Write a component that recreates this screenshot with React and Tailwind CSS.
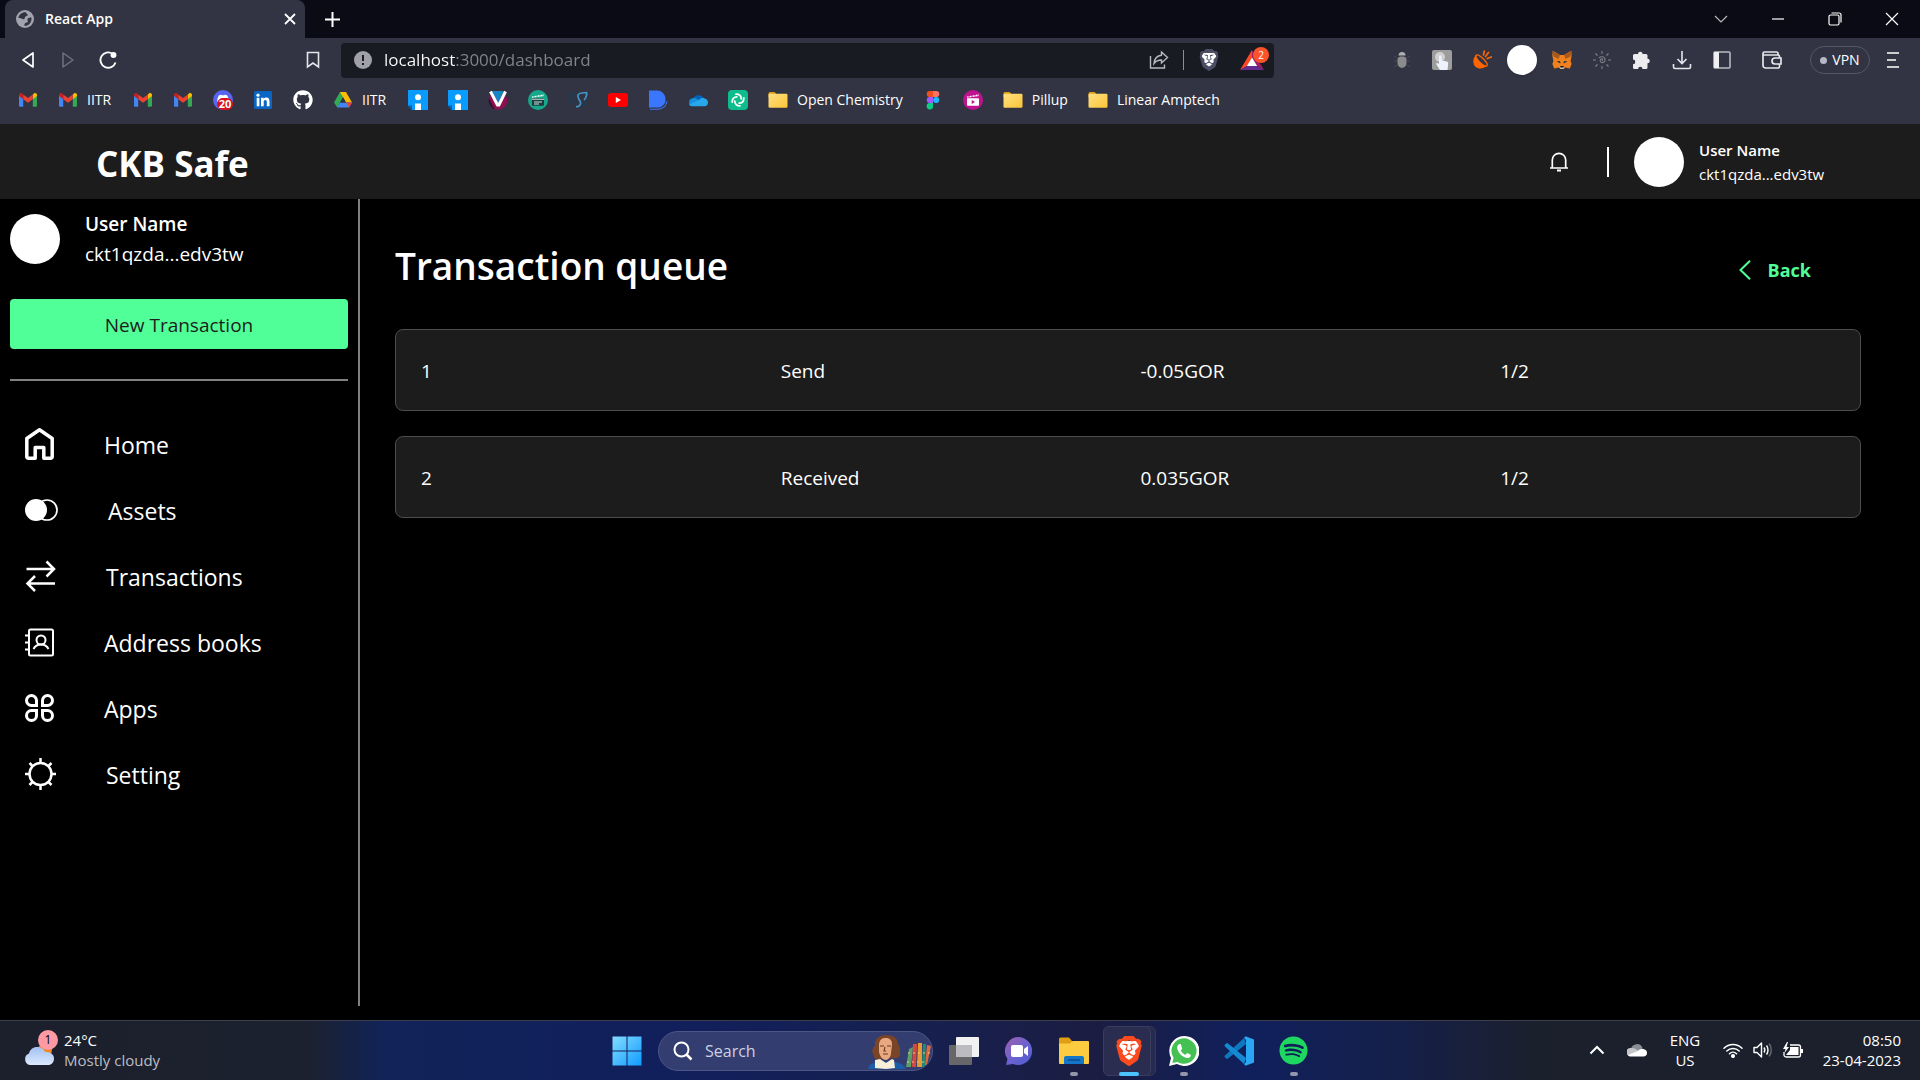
import React from 'react';
import { FaGithub, FaDiscord, FaSpotify } from 'react-icons/fa';
import { SiBrave } from 'react-icons/si';

/* ---------- bookmark icons ---------- */

const Gmail = () => (
  <svg width="20" height="20" viewBox="0 0 20 20">
    <path d="M1 5.5v10a1.3 1.3 0 0 0 1.3 1.3h2.9V8.2L1 5z" fill="#4285f4" />
    <path d="M14.8 8.2v8.6h2.9a1.3 1.3 0 0 0 1.3-1.3v-10z" fill="#34a853" />
    <path d="M14.8 4.4v4.8L19 6V4.9c0-1.6-1.8-2.5-3.1-1.5z" fill="#fbbc04" />
    <path d="M5.2 9.2V4.4L10 8l4.8-3.6v4.8L10 12.8z" fill="#ea4335" />
    <path d="M1 4.9V6l4.2 3.2V4.4L4.1 3.4C2.8 2.4 1 3.3 1 4.9z" fill="#c5221f" />
  </svg>
);

const Discord = () => (
  <span className="relative block h-5 w-5 rounded-full bg-[#5865f2]">
    <FaDiscord className="mx-auto pt-1 text-white" size={14} />
    <span className="absolute top-2 left-1 flex h-3 w-4 items-center justify-center rounded-full bg-[#d8121b] text-[11px] leading-3 font-bold text-white">
      20
    </span>
  </span>
);

const LinkedIn = () => (
  <svg width="20" height="20" viewBox="0 0 20 20">
    <rect x="1" y="1" width="18" height="18" rx="1.5" fill="#0a66c2" />
    <rect x="3.7" y="7.8" width="2.7" height="8.5" fill="#fff" />
    <circle cx="5" cy="5.2" r="1.6" fill="#fff" />
    <path d="M8 7.8h2.6V9c.5-.8 1.4-1.4 2.7-1.4 2.5 0 3.2 1.6 3.2 4v4.700h-2.700v-4.200c0-1.200-.2-2.200-1.500-2.200s-1.600 1-1.600 2.100v4.300H8z" fill="#fff" />
  </svg>
);

const Drive = () => (
  <svg width="20" height="20" viewBox="0 0 20 20">
    <path d="M7 2h6L10 7.2 4.300 17.500 1 12.500z" fill="#34a853" />
    <path d="M7 2h6l6 10.500h-6z" fill="#fbbc04" />
    <path d="M4 17.600l3.200-5.100H19l-3 5.100z" fill="#4285f4" />
    <path d="M13 12.500h6l-3 5.100z" fill="#ea4335" />
    <path d="M7.200 12.500L10 7.300l3 5.200z" fill="#323443" />
  </svg>
);

const Inpage = () => (
  <svg width="20" height="20" viewBox="0 0 20 20">
    <path d="M0 0h20v20H4L0 15.500z" fill="#0a9bff" />
    <path d="M0 15.500h4V20z" fill="#0560b5" />
    <circle cx="10" cy="7.300" r="3" fill="#fff" />
    <path d="M7 13.500h6V20H7z" fill="#fff" />
  </svg>
);

const Vee = () => (
  <svg width="20" height="20" viewBox="0 0 20 20">
    <circle cx="10" cy="10.500" r="9.300" fill="#8e0f4f" />
    <path d="M1 8A9.300 9.300 0 0 0 7 19.400z" fill="#3a1030" />
    <path d="M4 1h12l-6 12z" fill="#1585c4" />
    <path d="M2.500 1.500L9.500 15h1.400l6.600-13.500" fill="none" stroke="#fff" strokeWidth="3" />
  </svg>
);

const Clapper = ({ color, dark }) => (
  <svg width="20" height="20" viewBox="0 0 20 20">
    <circle cx="10" cy="10" r="10" fill={color} />
    <path d="M4 6.500l12-2.300v1.900L4 7.800z" fill="#fff" />
    <rect x="4" y="8.200" width="12" height="7.600" rx=".8" fill={dark ? '#1d3b3c' : '#fff'} />
    <path d="M6 5v2.500M9 4.500V7M12 4v2.500M15 3.500V6" stroke={color} strokeWidth=".9" />
    {dark ? (
      <path d="M4 9.200h12M6 12h8M6 14h5" stroke="#c8e6e0" strokeWidth="1.100" />
    ) : (
      <path d="M8.700 10v4l3.300-2z" fill={color} />
    )}
  </svg>
);

const BlueScript = () => (
  <svg width="20" height="20" viewBox="0 0 20 20" fill="none">
    <path d="M1 3h5l-1 3v6h4M2 3v9M13 12l5 5M18 9v6" stroke="#233a4e" strokeWidth="2" />
    <path d="M19 2.500c-4 .5-8 0-9 2.500s1.500 4.500 2.500 7c.8 2.500-2 5.500-4.500 4.500M19 2.500c-.8 3-.4 5.500-3 7.500" stroke="#4596c7" strokeWidth="1.700" />
  </svg>
);

const YouTube = () => (
  <svg width="20" height="20" viewBox="0 0 20 20">
    <rect y="3" width="20" height="14" rx="3" fill="#f00" />
    <path d="M7.800 7v6l5.200-3z" fill="#fff" />
  </svg>
);

const Dee = () => (
  <svg width="20" height="20" viewBox="0 0 20 20">
    <path d="M1 .5h8a8.500 8.500 0 0 1 8.500 8.500v8.500H1z" fill="#3b76ff" />
    <path d="M17.500 9.500v8H9.500a8 8 0 0 0 8-8z" fill="#323443" />
    <path d="M2 19.200h8c4.500 0 8.500-3.500 9-8" fill="none" stroke="#3b76ff" strokeWidth="1" />
  </svg>
);

const OneDrive = () => (
  <svg width="20" height="20" viewBox="0 0 20 20">
    <path d="M5 9a6 6 0 0 1 11-.5L10 13 3 12z" fill="#0364b8" />
    <path d="M4.500 8.200c2-.6 3.700 0 5.500 1.300l5 4-11 2.500a4 4 0 0 1 .5-7.800z" fill="#1490df" />
    <path d="M11 10c2-2 4-2.500 5.500-1.500 2.500.5 3.500 2.300 3.500 4 0 2.200-1.500 3.700-3.500 3.700H4C2.800 16.200 1.600 15.500 1 14.500z" fill="#28a8ea" />
  </svg>
);

const Element = () => (
  <svg width="20" height="20" viewBox="0 0 20 20" fill="none">
    <rect width="20" height="20" rx="4" fill="#0dbd8b" />
    <g stroke="#fff" strokeWidth="1.800" strokeLinecap="round">
      <path d="M8 4.200c3.400 0 5.200 2 5.200 4.600" />
      <path d="M15.800 8c0 3.400-2 5.200-4.600 5.200" />
      <path d="M12 15.800c-3.400 0-5.200-2-5.200-4.600" />
      <path d="M4.200 12c0-3.400 2-5.200 4.600-5.200" />
    </g>
  </svg>
);

const Folder = () => (
  <svg width="20" height="20" viewBox="0 0 20 20">
    <defs>
      <linearGradient id="fold" x1="0" y1="0" x2="1" y2="1">
        <stop offset="0" stopColor="#ffe083" />
        <stop offset="1" stopColor="#fbc536" />
      </linearGradient>
    </defs>
    <path d="M.5 3.500A1.500 1.500 0 0 1 2 2h4.500L8.500 4v3h-8z" fill="#e0a013" />
    <rect x=".5" y="3.800" width="19" height="14" rx="1.200" fill="url(#fold)" />
  </svg>
);

const Figma = () => (
  <svg width="20" height="20" viewBox="0 0 20 20">
    <path d="M10 1H6.700a3 3 0 0 0 0 6H10z" fill="#f24e1e" />
    <path d="M10 1h3.300a3 3 0 0 1 0 6H10z" fill="#ff7262" />
    <path d="M10 7H6.700a3 3 0 0 0 0 6H10z" fill="#a259ff" />
    <circle cx="13.200" cy="10" r="3" fill="#1abcfe" />
    <path d="M6.700 13H10v3.200a3.200 3.200 0 1 1-3.300-3.200z" fill="#0acf83" />
  </svg>
);

/* ---------- toolbar icons ---------- */

const Globe = () => (
  <svg width="18" height="18" viewBox="0 0 18 18">
    <circle cx="9" cy="9" r="9" fill="#a2a3ad" />
    <path d="M10 2.200c-3.500-.5-7 2-7.700 5.500 1.500.8 3 .2 4.200 1.300 1 1 2.500-.2 2.400-1.500C8.800 6.200 11.500 6.500 11.700 5c.1-1.200-1.700-1-1.700-2.800zM15.500 7.500c-1.500 0-3.500.3-4 1.500s1 1.800.2 3c-.8 1-2.700.5-3.200 2-.2.800-.1 1.500.2 2 4.300 0 7.300-3.800 6.800-8.500z" fill="#323443" />
  </svg>
);

const Share = () => (
  <svg width="20" height="20" viewBox="0 0 20 20" fill="none" stroke="#b9babd" strokeWidth="1.400">
    <path d="M1.500 6v12h14v-3.500M12.500 2l6 5.500-6 5.500V10c-3 0-5.500.7-7.500 3.500C5.500 8.500 8.500 5.500 12.500 5.200z" />
  </svg>
);

const ShieldLion = ({ size, color }) => (
  <span className="relative block">
    <svg className="absolute inset-0" width={size} height={size} viewBox="0 0 24 24">
      <path d="M5 4h14l1.500 6-3 7-5.500 4.500L6.500 17l-3-7z" fill="#fff" />
    </svg>
    <SiBrave className="relative" size={size} color={color} />
  </span>
);

const Bat = () => (
  <svg width="24" height="20" viewBox="0 0 24 20">
    <path d="M12 0L0 20l7-4 5-8z" fill="#ff4724" />
    <path d="M12 0l12 20-7-4-5-8z" fill="#9e1f63" />
    <path d="M0 20h24l-7-4H7z" fill="#662d91" />
    <path d="M12 7.500L6.800 16h10.400z" fill="#fff" />
  </svg>
);

const Bug = () => (
  <svg width="20" height="20" viewBox="0 0 20 20">
    <path d="M2 6l3 2M18 6l-3 2M2 11h3M18 11h-3M2 17l3-2M18 17l-3-2" stroke="#484a56" />
    <path d="M6.500 5.500a3.500 3.500 0 0 1 7 0z" fill="#b0b0b0" />
    <path d="M5.500 9a3 3 0 0 1 3-2.500h3a3 3 0 0 1 3 2.500v4a4.500 5 0 0 1-9 0z" fill="#8b8b8b" />
  </svg>
);

const Touch = () => (
  <svg width="20" height="20" viewBox="0 0 20 20">
    <rect width="20" height="20" rx="2" fill="#9d9d9d" />
    <circle cx="8" cy="7" r="5" fill="#d0d0d0" />
    <path d="M7 6.500a1.300 1.300 0 0 1 2.600 0v4l5 1c1.300.3 1.700 1 1.600 2l-.7 6.500H8l-3.500-5.500c-.8-1.200.7-2 1.500-1.200l1 .8z" fill="#eef3fb" />
  </svg>
);

const Orange = () => (
  <svg width="20" height="20" viewBox="0 0 20 20">
    <path d="M4 5C.5 8.500.5 14 3.500 16.800S12 19 15 15.500z" fill="#f60" />
    <ellipse cx="9.500" cy="10.500" rx="7.500" ry="2.400" transform="rotate(44 9.500 10.500)" fill="#323443" stroke="#f60" strokeWidth="1.400" />
    <path d="M11.500 5l.8-4M13.500 6.500l3-4M15.300 8.500l4-1.500" stroke="#f60" strokeWidth="1.700" strokeLinecap="round" />
  </svg>
);

const Fox = () => (
  <svg width="20" height="20" viewBox="0 0 20 20">
    <path d="M.7.800L8 5h4l7.300-4.200.3 5.200-1 5 1 3-1.800 4.500-4.800-1L11.500 19h-3L7 17.500l-4.800 1L.4 14l1-3-1-5z" fill="#f0811e" />
    <path d="M.7.800L8 5 6.500 9 1.400 6.500zM19.300.8L12 5l1.500 4 5.100-2.500z" fill="#a85a1c" />
    <path d="M4.500 11.500l3.500-.5.500 2.500zM15.500 11.500l-3.500-.5-.500 2.500z" fill="#233447" />
    <path d="M7.500 16.500h5l-.7 2.200H8.200z" fill="#d8cbc0" />
    <path d="M8.300 16h3.400v1.500H8.300z" fill="#161616" />
  </svg>
);

const Swirl = () => (
  <svg width="20" height="20" viewBox="0 0 20 20" fill="none" stroke="#808189" strokeWidth="1.100">
    <path d="M10 10.500c1-.2.800-1.700-.4-1.600-1.800.2-2 3 0 3.600 2.400.5 4-1.500 3.400-3.600-.7-2.200-4-3-6-1" />
    <path d="M10 1v3M10 16v3M1 10h3M16 10h3M3.500 3.500l2 2M14.500 14.500l2 2M3.500 16.500l2-2M14.500 5.500l2-2" />
  </svg>
);

const Puzzle = () => (
  <svg width="20" height="20" viewBox="0 0 20 20">
    <path d="M6 4a2.300 2.300 0 0 1 4.600 0H14a1.500 1.500 0 0 1 1.500 1.500v3.200a2.300 2.300 0 0 1 0 4.600v4.200A1.500 1.500 0 0 1 14 19h-3.500a2.200 2.200 0 0 0-4.400 0H2.500A1.500 1.500 0 0 1 1 17.500v-3.300a2.300 2.300 0 0 0 0-4.600V5.500A1.500 1.500 0 0 1 2.500 4z" fill="#ececef" />
  </svg>
);

const Download = () => (
  <svg width="20" height="20" viewBox="0 0 20 20" fill="none" stroke="#e6e6ea" strokeWidth="1.600">
    <path d="M10 1v12M5.500 9l4.500 4.500L14.500 9M1.500 14v3a1.500 1.500 0 0 0 1.500 1.500h14a1.500 1.500 0 0 0 1.500-1.500v-3" />
  </svg>
);

const Panel = () => (
  <svg width="18" height="18" viewBox="0 0 18 18">
    <rect x="1" y="1" width="16" height="16" rx="1" fill="none" stroke="#b9bac4" strokeWidth="1.600" />
    <path d="M1 1h5v16H1z" fill="#f0f0f3" />
  </svg>
);

const Wallet = () => (
  <svg width="20" height="20" viewBox="0 0 20 20" fill="none" stroke="#e6e6ea" strokeWidth="1.700">
    <path d="M1 5h15a1.500 1.500 0 0 1 1.500 1.500v1M16 5V3.500A1.500 1.500 0 0 0 14.500 2h-12A1.500 1.500 0 0 0 1 3.500v12A2.500 2.500 0 0 0 3.500 18H16a1.500 1.500 0 0 0 1.500-1.500v-2M19 8h-6a3 3 0 0 0 0 6h6z" />
  </svg>
);

/* ---------- sidebar icons ---------- */

const HomeIcon = () => (
  <svg width="29" height="32" viewBox="0 0 29 32" fill="none" stroke="#fff" strokeWidth="3.500" strokeLinejoin="round">
    <path d="M1.800 10.500L14.500 1.800l12.700 8.700v18.200a1.500 1.500 0 0 1-1.500 1.500h-6.900V19.500h-8.600v10.700H3.300a1.500 1.500 0 0 1-1.500-1.500z" />
  </svg>
);

const AssetsIcon = () => (
  <svg width="33" height="22" viewBox="0 0 33 22">
    <circle cx="22" cy="11" r="10" fill="none" stroke="#fff" strokeWidth="1.700" />
    <circle cx="11" cy="11" r="11" fill="#fff" />
  </svg>
);

const TransactionsIcon = () => (
  <svg width="31" height="32" viewBox="0 0 31 32" fill="none" stroke="#fff" strokeWidth="2.500">
    <path d="M1.500 9h27M21.500 1.500L29 9l-7.500 7.500M30 23.500H3M10 16l-7.500 7.500L10 31" />
  </svg>
);

const AddressIcon = () => (
  <svg width="29" height="29" viewBox="0 0 29 29" fill="none" stroke="#fff" strokeWidth="2">
    <rect x="4" y="1.500" width="24" height="26" rx="1.500" />
    <path d="M0 7.500h4M0 14.500h4M0 21.500h4" />
    <circle cx="16" cy="12" r="4.500" />
    <path d="M8.500 21c1.500-3 4-4.500 7.500-4.500s6 1.500 7.500 4.500" />
  </svg>
);

const AppsIcon = () => (
  <svg width="29" height="28" viewBox="0 0 29 28" fill="none" stroke="#fff" strokeWidth="3">
    <path d="M11.500 11.500H6.500a5 5 0 1 1 5-5z" />
    <path d="M17.500 11.500h5a5 5 0 1 0-5-5z" />
    <path d="M11.500 16.500H6.500a5 5 0 1 0 5 5z" />
    <path d="M17.500 16.500h5a5 5 0 1 1-5 5z" />
  </svg>
);

const SettingIcon = () => (
  <svg width="31" height="32" viewBox="0 0 31 32" fill="none" stroke="#fff" strokeWidth="2.500">
    <circle cx="15.500" cy="16" r="11" />
    <path d="M15.500 0v5M15.500 27v5M0 16h5M26 16h5M4.500 5l3.500 3.500M26.500 5L23 8.500M4.500 27L8 23.500M26.500 27L23 23.500" />
  </svg>
);

/* ---------- taskbar icons ---------- */

const Weather = () => (
  <span className="relative block h-10 w-8">
    <svg width="31" height="36" viewBox="0 0 31 36">
      <defs>
        <linearGradient id="cloud" x1="0" y1="0" x2="0" y2="1">
          <stop offset="0" stopColor="#a3c1f2" />
          <stop offset="1" stopColor="#dbe8fd" />
        </linearGradient>
      </defs>
      <circle cx="21" cy="20" r="7" fill="#f5871f" />
      <path d="M6 35a6 6 0 0 1-1-11.500c1-4 4-6.500 8-6.500 4.500 0 7 2.500 8 5 5-.5 9 2 9 6.500 0 4-2.500 6.500-6 6.500z" fill="url(#cloud)" />
    </svg>
    <span className="absolute top-0 left-[14px] flex h-5 w-5 items-center justify-center rounded-full bg-[#ff9aa5] text-xs text-black">
      1
    </span>
  </span>
);

const Windows = () => (
  <svg width="30" height="30" viewBox="0 0 30 30">
    <defs>
      <linearGradient id="win" x1="0" y1="0" x2="1" y2="1">
        <stop offset="0" stopColor="#84dcff" />
        <stop offset="1" stopColor="#0f9bff" />
      </linearGradient>
    </defs>
    <path d="M.5.500h14v14H.5zM15.500.500h14v14h-14zM.5 15.500h14v14H.5zM15.500 15.500h14v14h-14z" fill="url(#win)" />
  </svg>
);

const Poet = () => (
  <svg width="64" height="36" viewBox="0 0 64 36">
    <path d="M7 13C6 6 11 2 18 2s12 3 12 9c3 3 2 6 2 8 1 4-2 7-6 6l-13 1c-4 1-8-1-7-4-3-3-2-7 1-9z" fill="#7a4426" />
    <path d="M0 36c1-5 6-7 11-7h14c6 0 10 2 13 7z" fill="#1c5da8" />
    <path d="M11 11c1-5 3-6 7-6s6 2 6 7l-1 8c0 4-3 7-5 7-4 0-6-4-7-8z" fill="#e8a882" />
    <path d="M7 27l5-1 6 4 6-4 2 1 1 8-9 1-11-1z" fill="#f7efd8" />
    <path d="M12 13h4M19 13h4M17 14l-1 4h2M15 21h5" stroke="#6b3a20" strokeWidth="1.100" fill="none" />
    <path d="M41 16l4-2-2 20h-5z" fill="#5aa06a" />
    <path d="M45 11h4l-1 23h-4z" fill="#d5483f" />
    <path d="M50 10h4v24h-5z" fill="#e39a37" />
    <path d="M55 11h3l-1 23h-3z" fill="#1f8c74" />
    <path d="M59 12l4 1-4 19h-2z" fill="#dd6a3c" />
    <path d="M40 20h22M39 29h20" stroke="#f2cf63" strokeDasharray="2 3" />
  </svg>
);

const TaskView = () => (
  <svg width="30" height="28" viewBox="0 0 30 28">
    <rect y="8" width="23" height="20" rx="1" fill="#67676a" />
    <rect x="7" width="23" height="20" rx="1" fill="#f1f1f1" />
    <rect x="7" y="8" width="16" height="12" fill="#bcbcc0" />
  </svg>
);

const Chat = () => (
  <svg width="30" height="30" viewBox="0 0 30 30">
    <defs>
      <linearGradient id="chat" x1="0" y1="0" x2="1" y2="1">
        <stop offset="0" stopColor="#a05fa8" />
        <stop offset=".5" stopColor="#6d63d0" />
        <stop offset="1" stopColor="#4d5bd0" />
      </linearGradient>
    </defs>
    <path d="M15 1a14 14 0 1 1-6 27l-7 1 1.500-6A14 14 0 0 1 15 1z" fill="url(#chat)" />
    <rect x="7" y="9" width="12" height="12" rx="2" fill="#fff" />
    <path d="M20 13l4-3v10l-4-3z" fill="#fff" />
  </svg>
);

const Explorer = () => (
  <svg width="30" height="28" viewBox="0 0 30 28">
    <path d="M0 2a1.500 1.500 0 0 1 1.500-1.500H10L13 4v4H0z" fill="#e09f13" />
    <path d="M0 6.500h11l2.500-2.500H29a1 1 0 0 1 1 1v21a1 1 0 0 1-1 1H1a1 1 0 0 1-1-1z" fill="#fccb3f" />
    <path d="M5 27v-6a2 2 0 0 1 2-2h16a2 2 0 0 1 2 2v6z" fill="#1277c9" />
    <path d="M9 23h12" stroke="#0b4c8c" strokeWidth="1.500" />
  </svg>
);

const WhatsApp = () => (
  <svg width="30" height="30" viewBox="0 0 30 30">
    <path d="M15 0a15 15 0 1 1-7 28L0 30l2-8A15 15 0 0 1 15 0z" fill="#fff" />
    <path d="M15 2.300A12.700 12.700 0 1 1 8.500 26L3.300 27l1.300-5A12.700 12.700 0 0 1 15 2.300z" fill="#45c053" />
    <path d="M10.800 8c-1 0-2.600 1.200-2.600 3.500 0 5 6 10.500 10.300 10.500 2.500 0 3.500-1.800 3.300-3.200l-3.600-1.800-1.700 1.800c-2-.8-3.800-2.500-4.700-4.400l1.400-1.700L11.800 8z" fill="#fff" />
  </svg>
);

const VsCode = () => (
  <svg width="30" height="30" viewBox="0 0 30 30">
    <path d="M1 19.500L20 2l2 6L4 22.500c-.6.500-1.200.5-1.800 0L.8 21.200c-.6-.5-.4-1.200.2-1.700z" fill="#0f77bd" />
    <path d="M1 10.500L20 28l2-6L4 7.500c-.6-.5-1.200-.5-1.800 0L.8 8.800c-.6.500-.4 1.200.2 1.700z" fill="#1689d3" />
    <path d="M21.500.200L30 3.500v23l-8.500 3.300L20 28l2-2V4l-2-2z" fill="#2aa7f2" />
  </svg>
);

const CloudTray = () => (
  <svg width="20" height="14" viewBox="0 0 20 14">
    <path d="M4 6a6 6 0 0 1 11.500-1L10 10z" fill="#8b8d94" />
    <path d="M4 5c3-.5 5 1 9 4l-10 4A4 4 0 0 1 4 5z" fill="#c4c5c9" />
    <path d="M11 8c2-2.500 5-3 6.500-1.500C19.500 7 20 8.500 20 10c0 2-1.500 3.500-3.500 3.500H4C2.500 13.500 1.500 13 1 12z" fill="#fff" />
  </svg>
);

const Wifi = () => (
  <svg width="20" height="16" viewBox="0 0 20 16" fill="none" stroke="#fff" strokeWidth="1.500" strokeLinecap="round">
    <path d="M1 6.200a12.700 12.700 0 0 1 18 0M3.800 9a8.800 8.800 0 0 1 12.400 0M6.500 11.700a5 5 0 0 1 7 0" />
    <circle cx="10" cy="14" r="1.300" fill="#fff" />
  </svg>
);

const Speaker = () => (
  <svg width="20" height="18" viewBox="0 0 20 18" fill="none" stroke="#fff" strokeWidth="1.400" strokeLinejoin="round">
    <path d="M1 6.500v5h3L8.500 16V2L4 6.500zM11 6.500c1 1.500 1 3.500 0 5M13.500 4.500c2 2.500 2 6.500 0 9" />
    <path d="M16 2.500c3 3.500 3 9.500 0 13" stroke="#686a73" />
  </svg>
);

const Battery = () => (
  <svg width="20" height="16" viewBox="0 0 20 16">
    <path d="M7 3h8.500A2 2 0 0 1 17.500 5v8a2 2 0 0 1-2 2H3a2 2 0 0 1-2-2v-3" fill="none" stroke="#fff" strokeWidth="1.300" />
    <path d="M7 5h8.500v8H3l4-5z" fill="#fff" />
    <path d="M18 7h2v4h-2z" fill="#fff" />
    <path d="M4 0L0 7h2.500L1.500 11 6 5H3.500L5 0z" fill="#fff" />
  </svg>
);

/* ---------- data ---------- */

const bookmarks = [
  { name: 'Gmail', icon: <Gmail /> },
  { name: 'Gmail IITR', icon: <Gmail />, label: 'IITR' },
  { name: 'Gmail 2', icon: <Gmail /> },
  { name: 'Gmail 3', icon: <Gmail /> },
  { name: 'Discord', icon: <Discord /> },
  { name: 'LinkedIn', icon: <LinkedIn /> },
  { name: 'GitHub', icon: <FaGithub size={20} color="#fff" /> },
  { name: 'Drive', icon: <Drive />, label: 'IITR' },
  { name: 'Notes', icon: <Inpage /> },
  { name: 'Notes 2', icon: <Inpage /> },
  { name: 'Vee', icon: <Vee /> },
  { name: 'Movies', icon: <Clapper color="#17a78b" dark /> },
  { name: 'Script', icon: <BlueScript /> },
  { name: 'YouTube', icon: <YouTube /> },
  { name: 'Dework', icon: <Dee /> },
  { name: 'OneDrive', icon: <OneDrive /> },
  { name: 'Element', icon: <Element /> },
  { name: 'Open Chemistry', icon: <Folder />, label: 'Open Chemistry' },
  { name: 'Figma', icon: <Figma /> },
  { name: 'Clips', icon: <Clapper color="#c0128f" /> },
  { name: 'Pillup', icon: <Folder />, label: 'Pillup' },
  { name: 'Linear Amptech', icon: <Folder />, label: 'Linear Amptech' },
];

const extensions = [
  { name: 'Bug', icon: <Bug /> },
  { name: 'Touch', icon: <Touch /> },
  { name: 'Beam', icon: <Orange /> },
  { name: 'Blank', icon: <span className="block h-[30px] w-[30px] rounded-full bg-white shadow" /> },
  { name: 'MetaMask', icon: <Fox /> },
  { name: 'Swirl', icon: <Swirl /> },
  { name: 'Extensions', icon: <Puzzle /> },
  { name: 'Downloads', icon: <Download /> },
  { name: 'Side panel', icon: <Panel /> },
];

const navItems = [
  { label: 'Home', icon: <HomeIcon /> },
  { label: 'Assets', icon: <AssetsIcon /> },
  { label: 'Transactions', icon: <TransactionsIcon /> },
  { label: 'Address books', icon: <AddressIcon /> },
  { label: 'Apps', icon: <AppsIcon /> },
  { label: 'Setting', icon: <SettingIcon /> },
];

const queue = [
  { id: 1, type: 'Send', amount: '-0.05GOR', signed: '1/2' },
  { id: 2, type: 'Received', amount: '0.035GOR', signed: '1/2' },
];

const apps = [
  { name: 'Task view', icon: <TaskView /> },
  { name: 'Chat', icon: <Chat /> },
  { name: 'File Explorer', icon: <Explorer />, running: true },
  { name: 'Brave', icon: <ShieldLion size={30} color="#fb4a1d" />, active: true },
  { name: 'WhatsApp', icon: <WhatsApp />, running: true },
  { name: 'VS Code', icon: <VsCode /> },
  { name: 'Spotify', icon: <FaSpotify size={29} color="#1ed760" />, running: true },
];

/* ---------- browser chrome ---------- */

const ToolButton = ({ label, children }) => (
  <button aria-label={label} className="flex h-10 w-10 shrink-0 items-center justify-center">
    {children}
  </button>
);

const WindowButton = ({ label, children }) => (
  <button aria-label={label} className="flex h-full w-[57px] items-center justify-center">
    <svg width="14" height="14" viewBox="0 0 14 14" fill="none" stroke="#fff" strokeWidth="1.200">
      {children}
    </svg>
  </button>
);

const TabStrip = () => (
  <div className="flex h-[38px] items-center bg-[#0b0b15] pl-[5px]">
    <div className="flex h-full w-[300px] items-center rounded-t-lg bg-[#323443] pr-[7px] pl-[11px]">
      <Globe />
      <span className="ml-[11px] flex-1 text-sm font-semibold text-white">React App</span>
      <button aria-label="Close tab" className="p-[2px]">
        <svg width="12" height="12" viewBox="0 0 12 12" stroke="#fff" strokeWidth="1.800">
          <path d="M1 1l10 10M11 1L1 11" />
        </svg>
      </button>
    </div>
    <button aria-label="New tab" className="ml-5">
      <svg width="15" height="15" viewBox="0 0 15 15" stroke="#fff" strokeWidth="2">
        <path d="M7.500 0v15M0 7.500h15" />
      </svg>
    </button>
    <div className="ml-auto flex h-full">
      <WindowButton label="Search tabs">
        <path d="M1 4l6 6 6-6" stroke="#b9b9c0" />
      </WindowButton>
      <WindowButton label="Minimize">
        <path d="M1 7h12" />
      </WindowButton>
      <WindowButton label="Restore">
        <rect x="1" y="3" width="10" height="10" rx="1.500" />
        <path d="M3.500 1h7.500a2 2 0 0 1 2 2v7.500" />
      </WindowButton>
      <WindowButton label="Close">
        <path d="M1 1l12 12M13 1L1 13" />
      </WindowButton>
    </div>
  </div>
);

const Toolbar = () => (
  <div className="flex h-11 items-center bg-[#323443] pr-[7px] pl-2">
    <ToolButton label="Back">
      <svg width="14" height="18" viewBox="0 0 14 18" fill="none" stroke="#fff" strokeWidth="1.700">
        <path d="M12 2v14L2 9z" strokeLinejoin="round" />
      </svg>
    </ToolButton>
    <ToolButton label="Forward">
      <svg width="14" height="18" viewBox="0 0 14 18" fill="none" stroke="#70717d" strokeWidth="1.500">
        <path d="M2 2v14l10-7z" strokeLinejoin="round" />
      </svg>
    </ToolButton>
    <ToolButton label="Reload">
      <svg width="18" height="18" viewBox="0 0 18 18" fill="none" stroke="#fff" strokeWidth="1.900">
        <path d="M16.500 11.500A7.700 7.700 0 1 1 13.500 2.700" />
        <circle cx="14.500" cy="4" r="2" fill="#fff" />
      </svg>
    </ToolButton>
    <div className="ml-[165px]">
      <ToolButton label="Bookmark this page">
        <svg width="14" height="18" viewBox="0 0 14 18" fill="none" stroke="#e6e6ea" strokeWidth="1.600">
          <path d="M1.500 1.500h11v14.500L7 12l-5.500 4z" />
        </svg>
      </ToolButton>
    </div>
    <div className="ml-2 flex h-[35px] max-w-[933px] flex-1 items-center rounded bg-[#191b22] pr-[10px] pl-[13px]">
      <svg width="18" height="18" viewBox="0 0 18 18">
        <circle cx="9" cy="9" r="9" fill="#9fa0a8" />
        <path d="M9 4v6M9 12v2" stroke="#191b22" strokeWidth="2" />
      </svg>
      <input
        aria-label="Address"
        defaultValue="localhost:3000/dashboard"
        className="ml-3 min-w-0 flex-1 bg-[linear-gradient(90deg,#ffffff_71px,#85868b_71px)] bg-clip-text text-[17px] text-transparent outline-none"
      />
      <button aria-label="Share">
        <Share />
      </button>
      <span className="ml-[14px] h-5 w-px bg-[#8d8e93]" />
      <button aria-label="Shields" className="ml-[14px]">
        <ShieldLion size={22} color="#4b4e63" />
      </button>
      <button aria-label="Rewards" className="relative ml-5">
        <Bat />
        <span className="absolute -top-[3px] left-[13px] flex h-4 w-4 items-center justify-center rounded-full bg-[#fb542b] text-[10px] text-white">
          2
        </span>
      </button>
    </div>
    <div className="ml-auto flex items-center">
      {extensions.map((ext) => (
        <ToolButton key={ext.name} label={ext.name}>
          {ext.icon}
        </ToolButton>
      ))}
      <div className="mx-[10px]">
        <ToolButton label="Wallet">
          <Wallet />
        </ToolButton>
      </div>
      <button className="mr-[3px] ml-2 flex h-7 w-[60px] items-center justify-center gap-[5px] rounded-full border border-[#55576a] text-sm text-white">
        <span className="h-[7px] w-[7px] rounded-full bg-[#b5b6c6]" />
        VPN
      </button>
      <ToolButton label="Menu">
        <svg width="12" height="18" viewBox="0 0 12 18" stroke="#fff" strokeWidth="1.600">
          <path d="M0 2h12M0 9h9M0 16h12" />
        </svg>
      </ToolButton>
    </div>
  </div>
);

const BookmarksBar = () => (
  <div className="flex h-[42px] items-center gap-5 bg-[#323443] pb-[6px] pl-[18px]">
    {bookmarks.map((b) => (
      <a key={b.name} href="#" aria-label={b.name} className="flex items-center gap-[9px] text-sm whitespace-nowrap text-white">
        {b.icon}
        {b.label && <span className="min-w-[26px]">{b.label}</span>}
      </a>
    ))}
  </div>
);

/* ---------- page ---------- */

const Header = () => (
  <header className="flex h-[75px] items-center bg-[#1c1c1c] pr-[93px] pl-24 text-white">
    <h1 className="pt-1 text-[35px] leading-10 font-bold">CKB Safe</h1>
    <button aria-label="Notifications" className="ml-auto">
      <svg width="18" height="20" viewBox="0 0 18 20" fill="none" stroke="#fff" strokeWidth="1.700">
        <path d="M0 16h18M2.300 16V8a6.700 6.700 0 0 1 13.400 0v8" />
        <path d="M7 18.500h4" strokeWidth="2" />
      </svg>
    </button>
    <span className="ml-[39px] h-[30px] w-[2px] bg-white" />
    <span className="ml-[25px] h-[50px] w-[50px] rounded-full bg-white" />
    <div className="ml-[15px] w-32 text-[15px] leading-6">
      <p className="font-semibold">User Name</p>
      <p>ckt1qzda...edv3tw</p>
    </div>
  </header>
);

const Sidebar = () => (
  <aside className="w-[360px] shrink-0 border-r-2 border-[#808080] px-[10px] text-white">
    <div className="flex items-center gap-[25px] pt-[10px] text-[19px] leading-[30px]">
      <span className="h-[50px] w-[50px] rounded-full bg-white" />
      <div>
        <p className="font-semibold">User Name</p>
        <p>ckt1qzda...edv3tw</p>
      </div>
    </div>
    <button className="mt-[30px] h-[50px] w-full rounded bg-[#50ff97] pt-[2px] text-[19px] text-[#1c1c1c]">New Transaction</button>
    <hr className="mt-[30px] border-t-2 border-[#808080]" />
    <nav className="mt-[31px] pl-[15px]">
      {navItems.map((item) => (
        <a key={item.label} href="#" className="flex h-[66px] items-center gap-[50px] text-[23px]">
          <span className="pb-[2px]">{item.icon}</span>
          {item.label}
        </a>
      ))}
    </nav>
  </aside>
);

const TransactionQueue = () => (
  <main className="flex-1 pr-[59px] pl-[35px] text-white">
    <div className="flex h-[130px] items-center pt-1 pr-[50px]">
      <h2 className="text-[37px] font-semibold">Transaction queue</h2>
      <a href="#" className="mt-2 ml-auto flex items-center gap-[17px] text-lg font-bold text-[#50ff97]">
        <svg width="12" height="20" viewBox="0 0 12 20" fill="none" stroke="#50ff97" strokeWidth="2">
          <path d="M11 .8L1.500 10l9.500 9.200" />
        </svg>
        Back
      </a>
    </div>
    <table className="block">
      <tbody className="flex flex-col gap-[25px]">
        {queue.map((tx) => (
          <tr key={tx.id} className="grid h-[82px] grid-cols-4 items-center rounded-lg border border-[#4d4d4d] bg-[#1c1c1c] pt-[2px] pl-[25px] text-[19px]">
            <td>{tx.id}</td>
            <td>{tx.type}</td>
            <td>{tx.amount}</td>
            <td>{tx.signed}</td>
          </tr>
        ))}
      </tbody>
    </table>
  </main>
);

/* ---------- taskbar ---------- */

const Taskbar = () => (
  <footer className="flex h-[60px] items-center border-t border-[#3d404c] bg-[linear-gradient(90deg,#1c202c_0%,#1b212e_16%,#112358_20%,#111f5c_35%,#16204f_48%,#1b1d42_57%,#10205c_65%,#141f4c_72%,#1b202d_80%,#1c202c_100%)] text-[15px] text-white">
    <div className="flex flex-1 items-center gap-2 px-[19px] pb-[2px]">
      <span className="ml-[5px]">
        <Weather />
      </span>
      <div className="leading-5">
        <p>24°C</p>
        <p className="text-[#bcbec4]">Mostly cloudy</p>
      </div>
    </div>

    <div className="flex items-center">
      <button aria-label="Start" className="flex w-[55px] justify-center">
        <Windows />
      </button>
      <label className="mr-[3px] ml-1 flex h-10 w-[275px] items-center overflow-hidden rounded-full border border-[#4d5585] bg-[#343d70] pl-[14px]">
        <svg width="20" height="20" viewBox="0 0 20 20" fill="none" stroke="#fff" strokeWidth="2">
          <circle cx="8.500" cy="8.500" r="7" />
          <path d="M13.500 13.500l5 5" strokeWidth="2.500" />
        </svg>
        <input aria-label="Search" placeholder="Search" className="ml-3 w-0 flex-1 bg-transparent text-base outline-none placeholder:text-[#ccd0e0]" />
        <Poet />
      </label>
      {apps.map((app) => (
        <button
          key={app.name}
          aria-label={app.name}
          className="relative flex h-[50px] w-[55px] items-center justify-center"
        >
          {app.active && (
            <>
              <span className="absolute inset-y-0 right-0 w-5 rounded-md border border-[#34375a] bg-[#262a4e]" />
              <span className="absolute inset-y-0 right-[5px] left-[2px] rounded-md border border-[#3a3d5c] bg-[#2a2d4f]" />
            </>
          )}
          <span className="relative">{app.icon}</span>
          {app.active && <span className="absolute bottom-0 h-1 w-5 rounded-full bg-[#4cc2ff]" />}
          {app.running && <span className="absolute bottom-0 h-1 w-2 rounded-full bg-[#9296a8]" />}
        </button>
      ))}
    </div>

    <div className="flex flex-1 items-center justify-end px-[19px] pb-[2px]">
      <button aria-label="Show hidden icons">
        <svg width="16" height="10" viewBox="0 0 16 10" fill="none" stroke="#fff" strokeWidth="2">
          <path d="M1.500 8.500L8 2l6.500 6.500" />
        </svg>
      </button>
      <span className="ml-[22px]">
        <CloudTray />
      </span>
      <button className="ml-[22px] w-8 text-center leading-5">
        ENG
        <br />
        US
      </button>
      <button aria-label="Network, volume and battery" className="ml-[22px] flex items-center gap-[10px]">
        <Wifi />
        <Speaker />
        <Battery />
      </button>
      <div className="ml-[18px] w-20 text-right leading-5 whitespace-nowrap">
        <p>08:50</p>
        <p>23-04-2023</p>
      </div>
    </div>
  </footer>
);

const App = () => (
  <div className="flex min-h-screen flex-col bg-black font-['Open_Sans','Noto_Sans',sans-serif]">
    <TabStrip />
    <Toolbar />
    <BookmarksBar />
    <Header />
    <div className="flex flex-1 pb-[14px]">
      <Sidebar />
      <TransactionQueue />
    </div>
    <Taskbar />
  </div>
);

export default App;
